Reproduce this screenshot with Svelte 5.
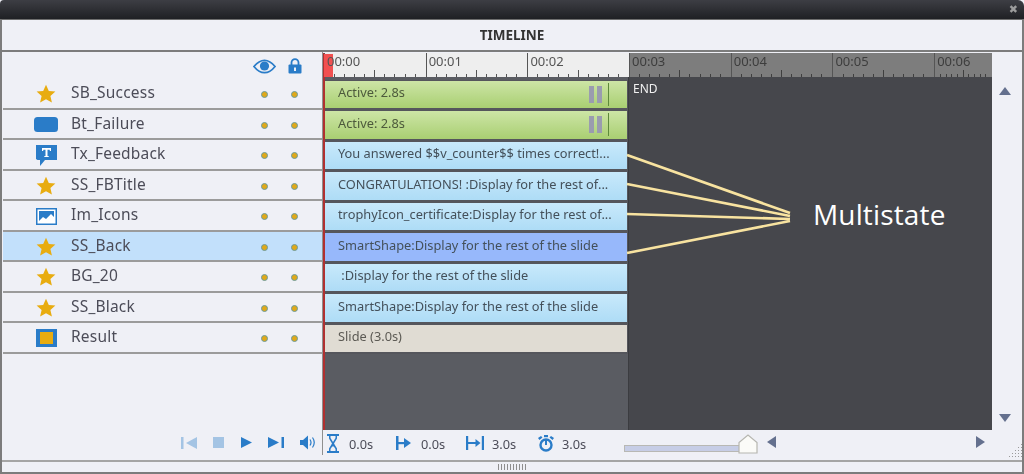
<script>
  const layers = [
    { name: 'SB_Success', icon: 'star', bar: 'Active: 2.8s', kind: 'green' },
    { name: 'Bt_Failure', icon: 'button', bar: 'Active: 2.8s', kind: 'green' },
    { name: 'Tx_Feedback', icon: 'text', bar: 'You answered $$v_counter$$ times correct!...', kind: 'blue' },
    { name: 'SS_FBTitle', icon: 'star', bar: 'CONGRATULATIONS! :Display for the rest of...', kind: 'blue' },
    { name: 'Im_Icons', icon: 'image', bar: 'trophyIcon_certificate:Display for the rest of...', kind: 'blue' },
    { name: 'SS_Back', icon: 'star', bar: 'SmartShape:Display for the rest of the slide', kind: 'sel', selected: true },
    { name: 'BG_20', icon: 'star', bar: ' :Display for the rest of the slide', kind: 'blue' },
    { name: 'SS_Black', icon: 'star', bar: 'SmartShape:Display for the rest of the slide', kind: 'blue' },
    { name: 'Result', icon: 'slide', bar: 'Slide (3.0s)', kind: 'slide' }
  ];
  const seconds = ['00:00', '00:01', '00:02', '00:03', '00:04', '00:05', '00:06'];
  const ticks = Array.from({ length: 10 }, (_, i) => i);
</script>

<div class="app">
  <div class="panel">
    <div class="titlebar"><span class="close">✖</span></div>
    <div class="frame">
      <div class="title">TIMELINE</div>
      <div class="main">
        <div class="left">
          <div class="head">
            <svg class="eye" viewBox="0 0 24 15" width="23" height="15"><path d="M1 7.500C5 2.500 8 1 12 1s7 1.500 11 6.500c-4 5-7 6.500-11 6.500S5 12.500 1 7.500z" fill="none" stroke="#2a7cc8" stroke-width="1.800"/><circle cx="12" cy="7" r="4.800" fill="#2a7cc8"/></svg>
            <svg class="lock" viewBox="0 0 14 16" width="14" height="16"><path d="M3.500 7V4.600a3.500 3.500 0 0 1 7 0V7" fill="none" stroke="#2a7cc8" stroke-width="1.800"/><rect x=".5" y="6.500" width="13" height="9" rx="1" fill="#2a7cc8"/><rect x="6" y="9.500" width="2" height="3.500" fill="#eff0f6"/></svg>
          </div>
          {#each layers as l}
            <div class="row" class:selected={l.selected}>
              <div class="ico">
                {#if l.icon === 'star'}
                  <svg viewBox="0 0 20 20" width="20" height="20"><path d="M10 .8l2.800 6.100 6.600.7-5 4.400 1.500 6.600L10 15.200 4.100 18.600l1.500-6.600-5-4.400 6.600-.7z" fill="#e8ac10"/></svg>
                {:else if l.icon === 'button'}
                  <svg viewBox="0 0 24 15" width="24" height="15"><rect width="24" height="15" rx="3.500" fill="#2a7cc8"/></svg>
                {:else if l.icon === 'text'}
                  <svg viewBox="0 0 21 21" width="21" height="21"><path d="M0 0h21v15H9l-5 6v-6H1.500L0 14z" fill="#2a7cc8"/><path d="M6 3h9v3h-1l-.5-1.300H11.500V11h1.200v1H8.300v-1h1.200V4.700H7.500L7 6H6z" fill="#fff"/></svg>
                {:else if l.icon === 'image'}
                  <svg viewBox="0 0 21 17" width="21" height="17"><rect x=".75" y=".75" width="19.500" height="15.500" fill="#fff" stroke="#2a7cc8" stroke-width="1.500"/><rect x="3" y="3" width="15" height="11" fill="#2a7cc8"/><path d="M3 13l4-4 3 2 5-5 3 3v5H3z" fill="#fff"/></svg>
                {:else}
                  <svg viewBox="0 0 21 18" width="21" height="18"><rect width="21" height="18" fill="#2a7cc8"/><rect x="4" y="3" width="13" height="12" fill="#e8ac10"/></svg>
                {/if}
              </div>
              <div class="name">{l.name}</div>
              <span class="dot d1"></span>
              <span class="dot d2"></span>
            </div>
          {/each}
        </div>

        <div class="timeline">
          <div class="ruler">
            {#each seconds as s, i}
              <div class="sec" class:past={i >= 3} class:cut={i === 6}>
                <span class="time">{s}</span>
                <div class="ticks">
                  {#each ticks as t}
                    <span class="tick" class:mid={t === 5} class:major={t === 0}></span>
                  {/each}
                </div>
              </div>
            {/each}
            <span class="head-marker"></span>
          </div>
          <div class="stage">
            <div class="tracks">
              {#each layers as l}
                <div class="bar {l.kind}">
                  <span class="bar-text">{l.bar}</span>
                  {#if l.kind === 'green'}
                    <span class="pause"></span>
                    <span class="pause"></span>
                    <span class="mark"></span>
                  {/if}
                </div>
              {/each}
            </div>
            <div class="end">END</div>
          </div>
        </div>

        <div class="vscroll">
          <span class="tri up"></span>
          <span class="tri down"></span>
        </div>
      </div>

      <div class="footer">
        <div class="playback">
          <svg class="faded" viewBox="0 0 16 12" width="16" height="12"><rect width="2.500" height="12" fill="#2a7cc8"/><path d="M16 0v12L5 6z" fill="#2a7cc8"/></svg>
          <svg class="faded" viewBox="0 0 11 11" width="11" height="11"><rect width="11" height="11" fill="#2a7cc8"/></svg>
          <svg viewBox="0 0 11 11" width="11" height="11"><path d="M0 0l11 5.500L0 11z" fill="#2a7cc8"/></svg>
          <svg viewBox="0 0 16 11" width="16" height="11"><path d="M0 0l11 5.500L0 11z" fill="#2a7cc8"/><rect x="13.500" width="2.500" height="11" fill="#2a7cc8"/></svg>
          <svg viewBox="0 0 16 15" width="16" height="15"><path d="M0 5h3l5-4.500v14L3 10H0z" fill="#2a7cc8"/><path d="M10 4.500q2 3 0 6M12.500 2.500q3.500 5 0 10" fill="none" stroke="#2a7cc8" stroke-width="1.200"/></svg>
        </div>
        <div class="stats">
          <span class="stat s1">
            <svg viewBox="0 0 12 19" width="12" height="19"><path d="M0 0h12v2H10v2.500L7 9.500l3 5V17h2v2H0v-2h2v-2.500l3-5-3-5V2H0z" fill="#2a7cc8"/><path d="M3.500 2h5v2L6 8 3.500 4zM5.200 12.500h1.600L8.500 15v2h-5v-2z" fill="#eff0f6"/></svg>
            <b>0.0s</b>
          </span>
          <span class="stat s2">
            <svg viewBox="0 0 15 14" width="15" height="14"><rect width="2.500" height="14" fill="#2a7cc8"/><rect x="2" y="6" width="7" height="2.200" fill="#2a7cc8"/><path d="M8 2l7 5-7 5z" fill="#2a7cc8"/></svg>
            <b>0.0s</b>
          </span>
          <span class="stat s3">
            <svg viewBox="0 0 18 14" width="18" height="14"><rect width="2.200" height="14" fill="#2a7cc8"/><rect x="2" y="6" width="9" height="2" fill="#2a7cc8"/><path d="M9.500 3l5 4-5 4z" fill="#2a7cc8"/><rect x="15.800" width="2.200" height="14" fill="#2a7cc8"/></svg>
            <b>3.0s</b>
          </span>
          <span class="stat s4">
            <svg viewBox="0 0 16 17" width="16" height="17"><circle cx="8" cy="10" r="5.500" fill="none" stroke="#2a7cc8" stroke-width="2.400"/><rect x="6" y="0" width="4" height="2.200" fill="#2a7cc8"/><path d="M7 4h2v6H7zM0 3l3-2 1.500 1.500-3 2.500zM16 3l-3-2-1.500 1.500 3 2.500z" fill="#2a7cc8"/></svg>
            <b>3.0s</b>
          </span>
        </div>
        <div class="slider">
          <span class="rail"></span>
          <svg class="thumb" viewBox="0 0 20 20" width="20" height="20"><path d="M1 19V8.500L10 1l9 7.500V19z" fill="#fbfbf8" stroke="#b6b6b0" stroke-width="1.200"/></svg>
        </div>
        <div class="hscroll">
          <span class="tri left-t"></span>
          <span class="tri right-t"></span>
        </div>
        <div class="resize"></div>
      </div>

      <div class="grip"><span></span></div>
    </div>
  </div>

  <svg class="callout" viewBox="0 0 1024 474" width="1024" height="474">
    <path d="M627 155L790 213M627 184L790 216M627 214L790 219M627 253L790 221" fill="none" stroke="#f8e3a0" stroke-width="2.600"/>
  </svg>
  <div class="callout-text">Multistate</div>
</div>

<style>
  :global(body) {
    margin: 0;
    background: #eff0f6;
  }
  .app {
    position: relative;
    width: 1024px;
    height: 474px;
    overflow: hidden;
    background: #eff0f6;
    font-family: "Noto Sans", "Open Sans", sans-serif;
    color: #45454f;
  }
  .panel {
    height: 100%;
    display: flex;
    flex-direction: column;
    filter: blur(0.35px);
  }
  .titlebar {
    height: 19px;
    flex: none;
    background: linear-gradient(#3d3e44, #1f2024);
    border-radius: 4px 6px 0 0;
    display: flex;
    justify-content: flex-end;
    align-items: center;
    padding-right: 6px;
  }
  .close {
    color: #9c9c9c;
    font-size: 11px;
    line-height: 1;
    font-family: "DejaVu Sans", sans-serif;
  }
  .frame {
    flex: 1;
    min-height: 0;
    display: flex;
    flex-direction: column;
    border-top: 1px solid #6e6e6e;
    border-left: 2px solid #7c7c7c;
    border-right: 2px solid #7c7c7c;
    border-bottom: 2px solid #7c7c7c;
  }
  .title {
    height: 30px;
    flex: none;
    display: flex;
    align-items: center;
    justify-content: center;
    font-size: 13.5px;
    font-weight: 700;
    color: #333;
    border-bottom: 2px solid #7c7c7c;
  }
  .main {
    height: 378px;
    flex: none;
    display: flex;
  }
  .left {
    width: 321px;
    flex: none;
    padding-left: 1px;
    box-sizing: border-box;
    border-right: 1px solid #8f8f8f;
  }
  .head {
    height: 27px;
    display: flex;
    align-items: flex-start;
    padding: 6px 0 0 250px;
    gap: 12px;
    box-sizing: border-box;
  }
  .eye { margin-top: 1px; }
  .row {
    height: 30.5px;
    box-sizing: border-box;
    border-bottom: 2px solid #9b9b9b;
    display: flex;
    align-items: center;
    font-size: 15.5px;
  }
  .row.selected { background: #c2e0fb; }
  .ico {
    width: 68px;
    padding: 2px 0 0 18px;
    box-sizing: border-box;
    display: flex;
    justify-content: center;
    flex: none;
  }
  .ico svg { display: block; }
  .name {
    width: 190px;
    flex: none;
    color: #4c4c58;
    line-height: 1;
    letter-spacing: 0.2px;
    margin-top: -1px;
  }
  .dot {
    width: 5px;
    height: 5px;
    border-radius: 50%;
    background: #e0a818;
    border: 1.5px solid #6a9a9c;
    flex: none;
    margin-top: 3px;
  }
  .d1 { margin-left: 0; }
  .d2 { margin-left: 23px; }

  .timeline {
    width: 669px;
    flex: none;
    border-left: 2px solid #b03030;
    box-sizing: border-box;
    margin-top: 1px;
    display: flex;
    flex-direction: column;
  }
  .ruler {
    height: 24px;
    flex: none;
    display: flex;
    position: relative;
    margin-left: -1px;
    background: #eeeeee;
  }
  .sec {
    width: 101.7px;
    flex: none;
    box-sizing: border-box;
    position: relative;
    border-left: 1px solid #555;
    display: flex;
    flex-direction: column;
    justify-content: flex-end;
    background: #eeeeee;
  }
  .sec.past { background: #7d7d7d; }
  .sec.cut { width: 58px; }
  .time {
    position: absolute;
    left: 2px;
    top: 1px;
    font-size: 13px;
    line-height: 14px;
    color: #555;
    z-index: 2;
  }
  .past .time { color: #3d3d3d; }
  .ticks {
    height: 7px;
    display: flex;
    align-items: flex-end;
  }
  .tick {
    flex: 1;
    height: 3px;
    box-shadow: -1px 0 0 #555;
  }
  .tick.mid { height: 7px; }
  .tick.major { box-shadow: none; }
  .past .tick { box-shadow: -1px 0 0 #3f3f3f; }
  .past .tick.major { box-shadow: none; }
  .head-marker {
    position: absolute;
    left: 0;
    top: 1px;
    width: 9px;
    height: 23px;
    background: #f25050;
  }
  .stage {
    flex: 1;
    display: flex;
    min-height: 0;
  }
  .tracks {
    width: 303px;
    flex: none;
    background: #5a5c62;
    padding-top: 2.500px;
  }
  .bar {
    height: 30.5px;
    box-sizing: border-box;
    border: 1px solid #55565c;
    border-bottom-width: 2px;
    border-left: none;
    display: flex;
    align-items: center;
    padding-left: 13px;
    font-size: 12.8px;
    color: #44505a;
    white-space: pre;
  }
  .bar-text { flex: 1; margin-top: -4px; }
  .green { background: linear-gradient(#cde5a6, #a9cf72); color: #4d5a3c; }
  .blue { background: linear-gradient(#c8e9fb, #aedcf6); }
  .sel { background: #97b8fb; }
  .slide { background: #e0dcd3; color: #5c5a54; }
  .pause {
    width: 5px;
    height: 17px;
    background: #9a9caf;
    margin-right: 3px;
  }
  .mark {
    width: 1px;
    height: 23px;
    background: #5e8a3a;
    margin: 0 18px 0 3px;
  }
  .end {
    flex: 1;
    background: #46474c;
    color: #f0f0f0;
    font-size: 12px;
    line-height: 14px;
    padding: 5px 0 0 4px;
    border-left: 1px solid #3b3c40;
  }
  .vscroll {
    width: 25px;
    flex: none;
    display: flex;
    flex-direction: column;
    justify-content: space-between;
    align-items: center;
    padding: 35px 0 8px;
    box-sizing: border-box;
  }
  .tri {
    width: 0;
    height: 0;
    display: block;
    border-style: solid;
    border-color: transparent;
  }
  .up { border-width: 0 6.500px 8px; border-bottom-color: #64708e; }
  .down { border-width: 8px 6.500px 0; border-top-color: #64708e; }
  .left-t { border-width: 6.500px 9px 6.500px 0; border-right-color: #64708e; }
  .right-t { border-width: 6.500px 0 6.500px 9px; border-left-color: #64708e; }

  .footer {
    flex: 1;
    min-height: 0;
    display: flex;
    align-items: flex-start;
    position: relative;
    border-bottom: 2px solid #a5a5a5;
  }
  .playback {
    width: 321px;
    height: 25px;
    flex: none;
    box-sizing: border-box;
    border-right: 1px solid #8f8f8f;
    padding: 0 6px 0 179px;
    display: flex;
    align-items: center;
    justify-content: space-between;
  }
  .faded { opacity: 0.38; }
  .stats {
    width: 301px;
    flex: none;
    height: 26px;
    display: flex;
    margin-top: -1px;
  }
  .stat {
    display: flex;
    align-items: center;
    gap: 10px;
    padding-top: 2px;
    font-size: 12.8px;
  }
  .stat b { font-weight: 400; color: #4c4c58; margin-top: 1px; }
  .s1 { margin-left: 4px; width: 69px; }
  .s2 { width: 70px; }
  .s3 { width: 72px; gap: 8px; }
  .s4 { gap: 8px; }
  .slider {
    width: 136px;
    flex: none;
    height: 28px;
    position: relative;
    display: flex;
    align-items: center;
    padding-top: 9px;
    box-sizing: border-box;
  }
  .rail {
    width: 118px;
    height: 5px;
    background: #c6cde6;
    border: 1px solid #b8b8b4;
  }
  .thumb {
    position: absolute;
    left: 114px;
    top: 4px;
  }
  .hscroll {
    width: 225px;
    flex: none;
    padding: 6px 0 0 7px;
    box-sizing: border-box;
    display: flex;
    justify-content: space-between;
  }
  .resize {
    position: absolute;
    right: 0;
    bottom: 3px;
    width: 14px;
    height: 14px;
    background: radial-gradient(circle, #9a9a9a 0.7px, transparent 1px) 0 0 / 3px 3px;
    clip-path: polygon(100% 0, 100% 100%, 0 100%);
  }
  .grip {
    height: 10px;
    flex: none;
    display: flex;
    justify-content: center;
    align-items: center;
  }
  .grip span {
    width: 28px;
    height: 6px;
    background: repeating-linear-gradient(90deg, #8e8e8e 0 1px, transparent 1px 3px);
  }
  .callout {
    position: absolute;
    left: 0;
    top: 0;
    pointer-events: none;
  }
  .callout-text {
    position: absolute;
    left: 813px;
    top: 195px;
    font-family: "Open Sans", sans-serif;
    font-size: 28px;
    letter-spacing: 0.15px;
    line-height: 38px;
    color: #fff;
  }
</style>
